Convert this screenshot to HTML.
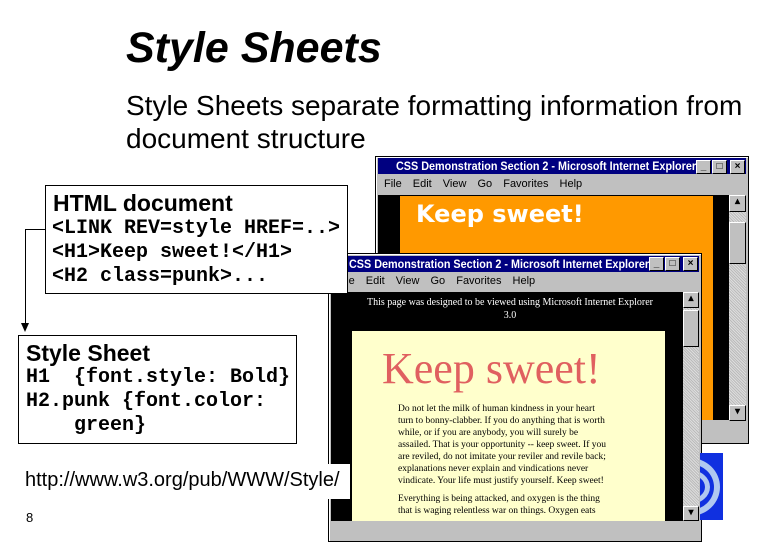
<!DOCTYPE html>
<html><head><meta charset="utf-8"><style>
body{margin:0;width:780px;height:540px;background:#fff;position:relative;overflow:hidden;font-family:"Liberation Sans",sans-serif}
.a{position:absolute}
.mono{font-family:"Liberation Mono",monospace;font-weight:bold}
.win{background:#c0c0c0;border:1px solid #000;box-shadow:inset 1px 1px 0 #fff}
.tb{background:#000080;color:#fff;font-weight:bold;font-size:12px;white-space:nowrap;overflow:hidden;line-height:16px}
.tb span{display:inline-block;transform:scaleX(0.9);transform-origin:left}
.menu{font-size:11px;color:#000;white-space:nowrap;word-spacing:8px}
.btn{width:13px;height:12px;background:#c0c0c0;border:1px solid;border-color:#fff #000 #000 #fff;font-size:10px;color:#000;text-align:center;line-height:12px;font-weight:bold}
.sb{background:#c0c0c0;background-image:repeating-linear-gradient(45deg,#ddd 0 1px,#bbb 1px 2px)}
.serif{font-family:"Liberation Serif",serif}
</style></head><body>
<div class="a" style="left:126px;top:24px;font-size:43px;font-weight:bold;font-style:italic">Style Sheets</div>
<div class="a" style="left:126px;top:89px;font-size:28px;line-height:33px">Style Sheets separate formatting information from<br>document structure</div>

<!-- back window -->
<div class="a win" style="left:375px;top:156px;width:372px;height:286px"></div>
<div class="a tb" style="left:378px;top:158px;width:368px;height:16px;padding-left:18px;box-sizing:border-box"><span>CSS Demonstration Section 2 - Microsoft Internet Explorer</span></div>
<div class="a btn" style="left:696px;top:160px">_</div><div class="a btn" style="left:712px;top:160px">□</div><div class="a btn" style="left:730px;top:160px">×</div>
<div class="a menu" style="left:384px;top:178px">File Edit View Go Favorites Help</div>
<div class="a" style="left:378px;top:195px;width:351px;height:225px;background:#000"></div>
<div class="a" style="left:400px;top:196px;width:313px;height:224px;background:#ff9900"></div>
<div class="a" style="left:416px;top:200px;font-size:24px;font-weight:bold;color:#fff;font-family:'DejaVu Sans',sans-serif">Keep sweet!</div>
<div class="a sb" style="left:729px;top:195px;width:17px;height:225px"></div>
<div class="a btn" style="left:729px;top:195px;width:15px;height:15px">▴</div>
<div class="a btn" style="left:729px;top:222px;width:15px;height:40px"></div>
<div class="a btn" style="left:729px;top:405px;width:15px;height:14px">▾</div>

<!-- front window -->
<div class="a win" style="left:328px;top:253px;width:372px;height:287px"></div>
<div class="a tb" style="left:331px;top:256px;width:368px;height:16px;padding-left:18px;box-sizing:border-box"><span>CSS Demonstration Section 2 - Microsoft Internet Explorer</span></div>
<div class="a" style="left:333px;top:258px;width:12px;height:12px;background:#4a7;border-radius:2px"></div>
<div class="a btn" style="left:649px;top:257px">_</div><div class="a btn" style="left:665px;top:257px">□</div><div class="a btn" style="left:683px;top:257px">×</div>
<div class="a menu" style="left:337px;top:275px">File Edit View Go Favorites Help</div>
<div class="a" style="left:331px;top:292px;width:352px;height:229px;background:#000"></div>
<div class="a serif" style="left:360px;top:296px;width:300px;font-size:10px;color:#fff;text-align:center;line-height:13px">This page was designed to be viewed using Microsoft Internet Explorer 3.0</div>
<div class="a" style="left:352px;top:331px;width:313px;height:190px;background:#ffffcc;overflow:hidden">
<div class="serif" style="position:absolute;left:30px;top:12px;font-size:44px;color:#e06060">Keep sweet!</div>
<div class="serif" style="position:absolute;left:46px;top:72px;width:210px;font-size:9.5px;line-height:12px">Do not let the milk of human kindness in your heart turn to bonny-clabber. If you do anything that is worth while, or if you are anybody, you will surely be assailed. That is your opportunity -- keep sweet. If you are reviled, do not imitate your reviler and revile back; explanations never explain and vindications never vindicate. Your life must justify yourself. Keep sweet!<br><span style="display:block;height:6px"></span>Everything is being attacked, and oxygen is the thing that is waging relentless war on things. Oxygen eats</div>
</div>
<div class="a sb" style="left:683px;top:292px;width:16px;height:229px"></div>
<div class="a btn" style="left:683px;top:292px;width:14px;height:14px">▴</div>
<div class="a btn" style="left:683px;top:310px;width:14px;height:35px"></div>
<div class="a btn" style="left:683px;top:506px;width:14px;height:13px">▾</div>

<!-- logo -->
<div class="a" style="left:700px;top:453px;width:23px;height:67px;background:#1030e0;overflow:hidden">
<div style="position:absolute;left:-40px;top:5px;width:60px;height:58px;border-radius:50%;border:6px solid #b0c8f0;box-sizing:border-box"></div>
<div style="position:absolute;left:-30px;top:17px;width:40px;height:34px;border-radius:50%;border:5px solid #b0c8f0;box-sizing:border-box"></div></div>

<!-- HTML doc box -->
<div class="a" style="left:45px;top:185px;width:303px;height:109px;border:1px solid #000;background:#fff;box-sizing:border-box"></div>
<div class="a" style="left:53px;top:190px;font-size:23px;font-weight:bold">HTML document</div>
<div class="a mono" style="left:52px;top:217px;font-size:20px;line-height:24px;white-space:pre">&lt;LINK REV=style HREF=..&gt;
&lt;H1&gt;Keep sweet!&lt;/H1&gt;
&lt;H2 class=punk&gt;...</div>
<div class="a" style="left:25px;top:229px;width:20px;height:1px;background:#000"></div>
<div class="a" style="left:25px;top:229px;width:1px;height:96px;background:#000"></div>
<div class="a" style="left:21px;top:323px;width:0;height:0;border-left:4px solid transparent;border-right:4px solid transparent;border-top:9px solid #000"></div>

<!-- style sheet box -->
<div class="a" style="left:18px;top:335px;width:279px;height:109px;border:1px solid #000;background:#fff;box-sizing:border-box"></div>
<div class="a" style="left:26px;top:340px;font-size:23px;font-weight:bold">Style Sheet</div>
<div class="a mono" style="left:26px;top:366px;font-size:20px;line-height:24px;white-space:pre">H1  {font.style: Bold}
H2.punk {font.color:
    green}</div>

<div class="a" style="left:20px;top:464px;width:330px;height:35px;background:#fff"></div>
<div class="a" style="left:25px;top:469px;font-size:20px">http://www.w3.org/pub/WWW/Style/</div>
<div class="a" style="left:26px;top:510px;font-size:13px">8</div>
</body></html>
